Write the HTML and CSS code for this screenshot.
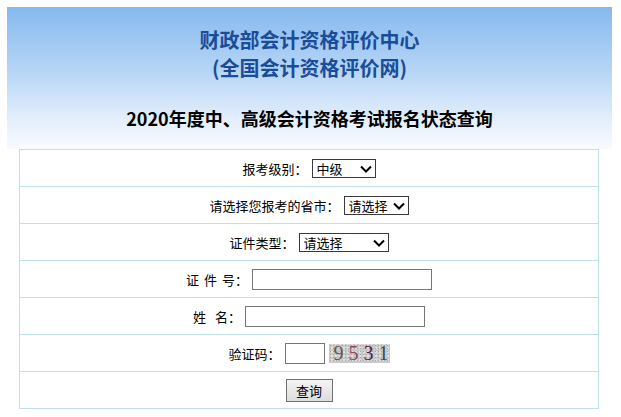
FILE: index.html
```html
<!DOCTYPE html>
<html>
<head>
    <meta charset="utf-8">
    <title>报名状态查询</title>
    <link rel="stylesheet" href="styles.css">
</head>
<body>
    <div class="page">
        <div class="header">
            <h1 class="site-title">财政部会计资格评价中心<br>(全国会计资格评价网)</h1>
            <h2 class="page-title">2020年度中、高级会计资格考试报名状态查询</h2>
        </div>

        <div class="query-form">
            <div class="form-row">
                <span class="label">报考级别：</span>
                <span class="select-wrap sel-level">
                    <select><option>中级</option><option>高级</option></select>
                    <svg class="arrow" width="12" height="8" viewBox="0 0 12 8"><path d="M1 1.5 L6 6.5 L11 1.5" fill="none" stroke="#000" stroke-width="2"/></svg>
                </span>
            </div>
            <div class="form-row">
                <span class="label">请选择您报考的省市：</span>
                <span class="select-wrap sel-prov">
                    <select><option>请选择</option></select>
                    <svg class="arrow" width="12" height="8" viewBox="0 0 12 8"><path d="M1 1.5 L6 6.5 L11 1.5" fill="none" stroke="#000" stroke-width="2"/></svg>
                </span>
            </div>
            <div class="form-row">
                <span class="label">证件类型：</span>
                <span class="select-wrap sel-type">
                    <select><option>请选择</option></select>
                    <svg class="arrow" width="12" height="8" viewBox="0 0 12 8"><path d="M1 1.5 L6 6.5 L11 1.5" fill="none" stroke="#000" stroke-width="2"/></svg>
                </span>
            </div>
            <div class="form-row">
                <span class="label"><span class="gap-sm">证件</span>号：</span>
                <input type="text" class="text-input">
            </div>
            <div class="form-row">
                <span class="label"><span class="gap-lg">姓</span>名：</span>
                <input type="text" class="text-input">
            </div>
            <div class="form-row">
                <span class="label">验证码：</span>
                <input type="text" class="code-input">
                <span class="captcha">
                    <span class="d1">9</span><span class="d2">5</span><span class="d3">3</span><span class="d4">1</span>
                </span>
            </div>
            <div class="form-row">
                <button type="button" class="btn">查询</button>
            </div>
        </div>
    </div>
</body>
</html>
```

FILE: styles.css
```css
body {
    margin: 7px;
    font-family: "Noto Sans CJK SC", "Liberation Sans", sans-serif;
    font-size: 13px;
    color: #000;
    background: #fff;
}
.page {
    width: 605px;
}
.header {
    height: 142px;
    padding-top: 19px;
    box-sizing: border-box;
    background: linear-gradient(to bottom, #86b9ee 0%, #b6d5f6 45%, #e4effb 80%, #f8fbff 100%);
    text-align: center;
}
.site-title {
    margin: 0;
    font-size: 20px;
    line-height: 28px;
    font-weight: bold;
    color: #1b4c98;
}
.page-title {
    margin: 22px 0 0;
    font-size: 18px;
    line-height: 28px;
    font-weight: bold;
    color: #000;
}
.query-form {
    width: 580px;
    margin-left: 12px;
    box-sizing: border-box;
    border: 1px solid #bfe1e8;
    border-bottom: none;
    background: #fff;
}
.form-row {
    height: 36px;
    border-bottom: 1px solid #bfe1e8;
    display: flex;
    align-items: center;
    justify-content: center;
    gap: 4px;
}
.label {
    white-space: nowrap;
}
.gap-sm {
    letter-spacing: 5px;
}
.gap-lg {
    letter-spacing: 9px;
}
.select-wrap {
    position: relative;
    display: inline-block;
}
.select-wrap select {
    -webkit-appearance: none;
    appearance: none;
    height: 19px;
    padding: 0 0 0 4px;
    margin: 0;
    border: 1px solid #3a3a3a;
    border-radius: 0;
    background: #fff;
    font-family: "Noto Sans CJK SC", sans-serif;
    font-size: 13px;
    line-height: 17px;
    color: #000;
    box-sizing: border-box;
    display: block;
}
.sel-level select { width: 64px; }
.sel-prov select { width: 65px; }
.sel-type select { width: 90px; }
.arrow {
    position: absolute;
    right: 4px;
    top: 6px;
    pointer-events: none;
}
.text-input {
    width: 180px;
    height: 21px;
    box-sizing: border-box;
    border: 1px solid #767676;
    margin: 0;
    padding: 0 2px;
}
.code-input {
    width: 40px;
    height: 21px;
    box-sizing: border-box;
    border: 1px solid #767676;
    margin: 0;
}
.captcha {
    width: 61px;
    height: 19px;
    box-sizing: border-box;
    padding-left: 5px;
    display: inline-flex;
    align-items: center;
    gap: 5px;
    background-color: #c9c9c9;
    background-image:
        radial-gradient(#a8a8a8 0.8px, transparent 1px),
        radial-gradient(#e2e2e2 0.8px, transparent 1px);
    background-size: 3px 3px, 4px 4px;
    background-position: 0 0, 1px 2px;
    font-family: "Liberation Serif", serif;
    font-size: 20px;
    line-height: 19px;
}
.d1 { color: #5a5a5a; }
.d2 { color: #8c4a4a; }
.d3 { color: #4a1c5e; }
.d4 { color: #2e4f52; }
.btn {
    width: 47px;
    height: 23px;
    margin: 0;
    padding: 0;
    border: 1px solid #707070;
    border-radius: 0;
    background: linear-gradient(to bottom, #f4f4f4, #dcdcdc);
    font-family: "Noto Sans CJK SC", sans-serif;
    font-size: 13px;
    color: #000;
}
```
